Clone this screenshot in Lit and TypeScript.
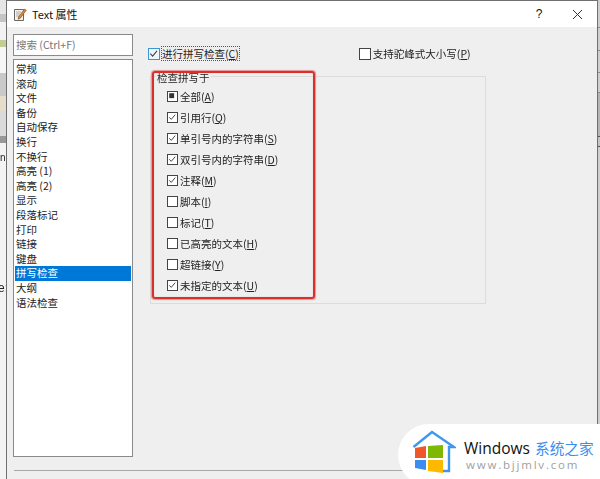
import { LitElement, html, css, svg } from "lit";
import { customElement } from "lit/decorators.js";

const NAV = ["常规","滚动","文件","备份","自动保存","换行","不换行","高亮 (1)","高亮 (2)","显示","段落标记","打印","链接","键盘","拼写检查","大纲","语法检查"];
const OPTS: [string,string,string][] = [
  ["全部","A","mixed"],["引用行","Q","on"],["单引号内的字符串","S","on"],["双引号内的字符串","D","on"],["注释","M","on"],
  ["脚本","I","off"],["标记","T","off"],["已高亮的文本","H","off"],["超链接","Y","off"],["未指定的文本","U","on"],
];
const LEFT_BANDS: [number,string][] = [[14,"#e6e6e6"],[8,"#c4c4c4"],[18,"#f2f2f2"],[7,"#c3cc94"],[26,"#f6f6f6"],[23,"#c9c9c9"],[15,"#e6dccb"],[25,"#dadada"],[7,"#989898"],[336,"#f3f3f3"]];
const RIGHT_BANDS: [number,string][] = [[27,"#cfcfcf"],[1,"#8c8c8c"],[22,"#cfcfcf"],[1,"#8c8c8c"],[21,"#cfcfcf"],[1,"#8c8c8c"],[19,"#cfcfcf"],[1,"#8c8c8c"],[43,"#b5b5b5"],[1,"#555"],[9,"#c5c5c5"],[1,"#555"],[277,"#cfcfcf"]];

@customElement("app-root")
export class AppRoot extends LitElement {
  static styles = css`
    :host { display: block; width: 600px; height: 479px; overflow: hidden; position: relative; background: #f0f0f0;
      font-family: "Noto Sans CJK SC", "Liberation Sans", sans-serif; font-size: 10.5px; color: #222; }
    .page { display: flex; height: 479px; filter: blur(0.3px); }
    .behind { width: 6px; flex: none; display: flex; flex-direction: column; position: relative; font-family: "Liberation Sans", sans-serif; font-size: 12px; color: #222; overflow: hidden; }
    .behind-n { position: absolute; left: 0; top: 151px; line-height: 14px; font-size: 10px; }
    .behind-e { position: absolute; left: -2px; top: 281px; line-height: 14px; }
    .dialog { width: 592px; box-sizing: border-box; flex: none; display: flex; flex-direction: column; background: #efefef; border: 1px solid #707070; border-bottom: 0; }
    .strip { width: 2px; flex: none; display: flex; flex-direction: column; }
    .title { height: 26px; background: #fff; display: flex; align-items: center; padding-left: 7px; font-size: 10.5px; flex: none; color: #111; }
    .title-icon { margin-right: 5px; flex: none; display: block; }
    .title-text { flex: 1; font-size: 11px; }
    .help { width: 16px; text-align: center; font-size: 12px; margin-right: 26px; font-family: "Liberation Sans", sans-serif; }
    .close { margin-right: 15px; flex: none; display: block; }
    .body { flex: 1; display: flex; padding: 7px 0 0 6px; min-height: 0; }
    .left { width: 120px; flex: none; display: flex; flex-direction: column; gap: 3px; }
    .search { height: 22px; box-sizing: border-box; border: 1px solid #8a8a8a; background: #fff; color: #777; padding-left: 2px; line-height: 19px; }
    .list { height: 398px; box-sizing: border-box; border: 1px solid #8a8a8a; background: #fff; padding-top: 2px; }
    .item { height: 14.6px; line-height: 14.6px; padding: 0 1px; margin: 0 1px; white-space: nowrap; }
    .item.sel { background: #0078d7; color: #fff; }
    .right { flex: 1; padding: 13px 0 0 15px; }
    .top { display: flex; height: 13px; align-items: center; }
    .cb { width: 11px; height: 11px; box-sizing: border-box; border: 1px solid #444; background: #fff; flex: none; display: block; margin-right: 2px; }
    .cb.big { width: 12px; height: 12px; margin-right: 2px; }
    .cb.blue { border-color: #3a97d4; background: #eef7fd; }
    .focus { outline: 1px dotted #555; line-height: 13px; }
    .camel { margin-left: 120px; display: flex; align-items: center; }
    u { text-decoration-thickness: 1px; text-underline-offset: 1px; }
    .group { margin: 16px 0 0 2px; width: 336px; height: 228px; box-sizing: border-box; border: 1px solid #dcdcdc; position: relative; padding: 9px 0 0 16px; }
    .legend { position: absolute; left: 5px; top: -6px; background: #efefef; line-height: 14px; padding: 0 1px; }
    .opts { display: flex; flex-direction: column; }
    .opt { height: 21px; display: flex; align-items: center; white-space: nowrap; }
    .annot { position: absolute; left: 152px; top: 71px; width: 163px; height: 228px; box-sizing: border-box; border: 2px solid #d9302c; border-radius: 3px; box-shadow: 0 0 1px 1px rgba(224,70,70,.55), inset 0 0 1px rgba(224,70,70,.4); }
    .rule { height: 1px; background: #a8a8a8; margin: 0 0 8px 7px; width: 583px; flex: none; }
    .badge { position: absolute; left: 398px; top: 424px; width: 202px; height: 62px; background: #fff; border-radius: 31px 0 0 31px; display: flex; align-items: flex-start; padding-left: 14px; box-sizing: border-box; }
    .logo { flex: none; margin: 4px 8px 0 0; display: block; }
    .btext { display: flex; flex-direction: column; margin-top: 15px; white-space: nowrap; }
    .bl1 { display: flex; align-items: center; gap: 5px; font-family: "Open Sans", "Liberation Sans", sans-serif; font-size: 15.5px; line-height: 18px; color: #111; font-weight: 500; }
    .bl1 span { font-family: "Noto Sans CJK SC", sans-serif; font-size: 14.7px; color: #3a8fee; font-weight: 400; }
    .bl2 { font-family: "Open Sans", "Liberation Sans", sans-serif; font-size: 11.5px; letter-spacing: 1.8px; color: #a0a0a0; line-height: 16px; margin-left: 2px; }
  `;

  private cb(state: string, cls = "") {
    const s = cls.includes("big") ? 12 : 11;
    return html`<svg class="cb ${cls}" viewBox="0 0 11 11" width=${s} height=${s}>
      ${state === "on" ? svg`<path d="M1.5 5.2 L4 7.8 L8.800 2" fill="none" stroke="#444" stroke-width="1.2"/>` : ""}
      ${state === "mixed" ? svg`<rect x="1.500" y="1.500" width="6" height="6" fill="#333"/>` : ""}
    </svg>`;
  }

  private band([h, c]: [number, string]) {
    return html`<div style="height:${h}px;background:${c};flex:none"></div>`;
  }

  render() {
    return html`<div class="page">
      <div class="behind">
        ${LEFT_BANDS.map((b) => this.band(b))}
        <span class="behind-n">n</span>
        <span class="behind-e">e;</span>
      </div>
      <div class="dialog">
        <div class="title">
          <svg class="title-icon" width="13" height="13" viewBox="0 0 13 13">
            <path d="M.5 1.500h9v11h-9z" fill="#f7f4ea" stroke="#666"/>
            <path d="M2 4h5M2 6h4M2 8h3" stroke="#aaa"/>
            <path d="M4.500 9l6-8 1.800 1.200-6 8-2.300 1z" fill="#d9873c" stroke="#7a4a20" stroke-width=".6"/>
          </svg>
          <span class="title-text">Text 属性</span>
          <span class="help">?</span>
          <svg class="close" width="9" height="9" viewBox="0 0 9 9"><path d="M0 0l9 9M9 0L0 9" stroke="#333" stroke-width="1" fill="none"/></svg>
        </div>
        <div class="body">
          <div class="left">
            <div class="search">搜索 (Ctrl+F)</div>
            <div class="list">
              ${NAV.map((n, i) => html`<div class="item ${i === 14 ? "sel" : ""}">${n}</div>`)}
            </div>
          </div>
          <div class="right">
            <div class="top">
              ${this.cb("on", "big blue")}<span class="focus">进行拼写检查(<u>C</u>)</span>
              <div class="camel">${this.cb("off", "big")}<span>支持驼峰式大小写(<u>P</u>)</span></div>
            </div>
            <div class="group">
              <span class="legend">检查拼写于</span>
              <div class="opts">
                ${OPTS.map(([t, k, s]) => html`<div class="opt">${this.cb(s)}<span>${t}(<u>${k}</u>)</span></div>`)}
              </div>
            </div>
          </div>
        </div>
        <div class="rule"></div>
      </div>
      <div class="strip">${RIGHT_BANDS.map((b) => this.band(b))}</div>
    </div>
    <div class="annot"></div>
    <div class="badge">
      <svg class="logo" width="44" height="46" viewBox="0 0 44 46">
        <path d="M1.500 19 L20 4 L42 19 H37 V43 H31" fill="none" stroke="#3f97f0" stroke-width="2.4" stroke-linejoin="miter"/>
        <path d="M3 20 L14 18 V30 H3 Z" fill="#f0562a"/>
        <path d="M16 18 L31 17 V30 H16 Z" fill="#7fb800"/>
        <path d="M3 32 H14 V42 L3 40 Z" fill="#3d8df0"/>
        <path d="M16 32 H31 V45 L16 43 Z" fill="#fdb900"/>
      </svg>
      <div class="btext">
        <div class="bl1">Windows <span>系统之家</span></div>
        <div class="bl2">www.bjjmlv.com</div>
      </div>
    </div>`;
  }
}
